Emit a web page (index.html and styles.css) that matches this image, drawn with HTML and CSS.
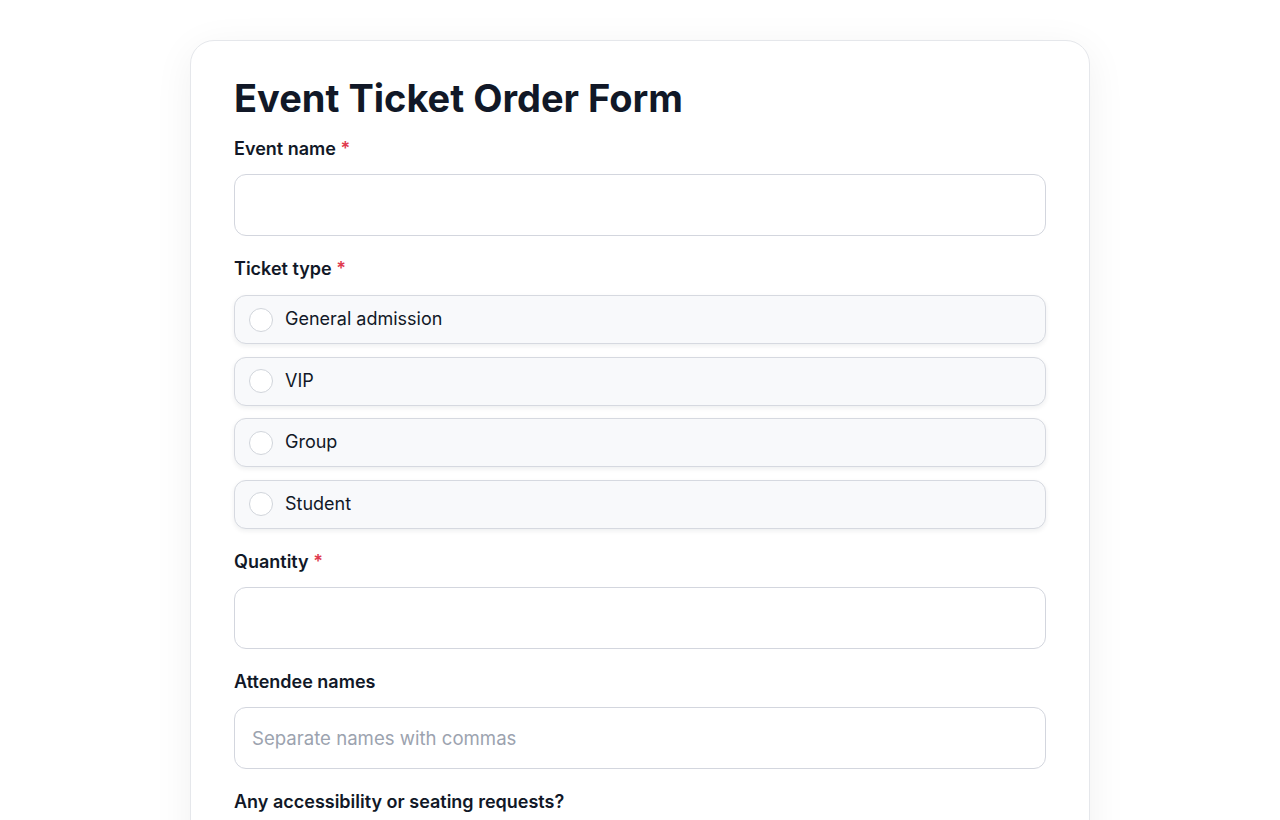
FILE: index.html
```html
<!DOCTYPE html>
<html lang="en">
<head>
    <meta charset="UTF-8">
    <meta name="viewport" content="width=device-width, initial-scale=1.0">
    <title>Event Ticket Order Form</title>
    <link rel="stylesheet" href="styles.css">
</head>
<body>
    <!-- Order form card -->
    <form class="card">
        <h1 class="title">Event Ticket Order Form</h1>

        <div class="field">
            <label class="field-label" for="eventName">Event name <span class="req">*</span></label>
            <input class="text-input" type="text" id="eventName">
        </div>

        <div class="field">
            <div class="field-label">Ticket type <span class="req">*</span></div>
            <div class="options">
                <label class="option"><input type="radio" name="ticket" class="radio"><span>General admission</span></label>
                <label class="option"><input type="radio" name="ticket" class="radio"><span>VIP</span></label>
                <label class="option"><input type="radio" name="ticket" class="radio"><span>Group</span></label>
                <label class="option"><input type="radio" name="ticket" class="radio"><span>Student</span></label>
            </div>
        </div>

        <div class="field">
            <label class="field-label" for="quantity">Quantity <span class="req">*</span></label>
            <input class="text-input" type="text" id="quantity">
        </div>

        <div class="field">
            <label class="field-label" for="attendees">Attendee names</label>
            <input class="text-input" type="text" id="attendees" placeholder="Separate names with commas">
        </div>

        <div class="field">
            <label class="field-label" for="requests">Any accessibility or seating requests?</label>
            <textarea class="text-input text-area" id="requests"></textarea>
        </div>

        <button class="submit" type="button">Submit order</button>
    </form>
</body>
</html>
```

FILE: styles.css
```css
/* Page */
body {
    margin: 0;
    background-color: #ffffff;
    font-family: Inter, "Noto Sans", sans-serif;
    color: #111827;
}

.card {
    width: 812px;
    margin: 40px auto 40px;
    padding: 33px 43px 44px;
    background-color: #ffffff;
    border: 1px solid #e5e7eb;
    border-radius: 24px;
    box-shadow: 0 8px 40px rgba(17, 24, 39, 0.06);
    display: flex;
    flex-direction: column;
}

.title {
    margin: 0 0 16px;
    font-size: 38px;
    line-height: 48px;
    font-weight: 700;
    color: #111827;
}

.field {
    display: flex;
    flex-direction: column;
    margin-bottom: 22px;
}

.field-label {
    font-size: 18px;
    line-height: 20px;
    font-weight: 600;
    padding-top: 1px;
    margin-bottom: 15px;
    color: #111827;
}

.req {
    color: #e03a4e;
}

.text-input {
    box-sizing: border-box;
    height: 62px;
    padding: 0 17px;
    border: 1px solid #d3d6de;
    border-radius: 12px;
    background-color: #ffffff;
    font-family: inherit;
    font-size: 18.6px;
    color: #111827;
    outline: none;
}

.text-input::placeholder {
    color: #9ca3af;
}

.text-area {
    height: 120px;
    padding: 16px 17px;
    resize: vertical;
}

/* Radio options */
.options {
    display: flex;
    flex-direction: column;
    gap: 12.67px;
    margin-top: 1px;
}

.option {
    box-sizing: border-box;
    height: 49px;
    display: flex;
    align-items: center;
    gap: 12px;
    padding: 0 14px;
    background-color: #f8f9fb;
    border: 1px solid #d6d9e0;
    border-radius: 12px;
    box-shadow: 0 2px 5px rgba(17, 24, 39, 0.07);
    font-size: 18px;
    color: #111827;
    cursor: pointer;
}

.option span {
    margin-top: -2px;
}

.radio {
    appearance: none;
    -webkit-appearance: none;
    margin: 0;
    width: 24px;
    height: 24px;
    border: 1px solid #d1d5db;
    border-radius: 50%;
    background-color: #ffffff;
    flex-shrink: 0;
}

.radio:checked {
    border: 7px solid #111827;
}

.submit {
    align-self: flex-start;
    height: 52px;
    padding: 0 28px;
    border: none;
    border-radius: 12px;
    background-color: #111827;
    color: #ffffff;
    font-family: inherit;
    font-size: 17px;
    font-weight: 600;
    cursor: pointer;
}
```
